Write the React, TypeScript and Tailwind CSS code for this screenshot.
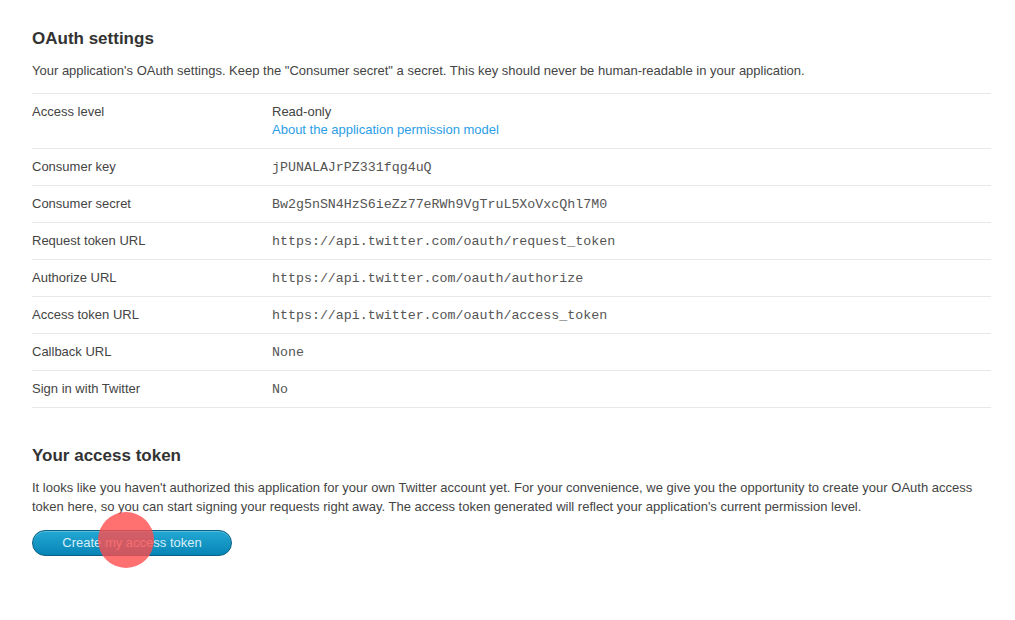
const rows: { label: string; value: string; mono?: boolean; link?: string }[] = [
  { label: 'Access level', value: 'Read-only', link: 'About the application permission model' },
  { label: 'Consumer key', value: 'jPUNALAJrPZ331fqg4uQ', mono: true },
  { label: 'Consumer secret', value: 'Bw2g5nSN4HzS6ieZz77eRWh9VgTruL5XoVxcQhl7M0', mono: true },
  { label: 'Request token URL', value: 'https://api.twitter.com/oauth/request_token', mono: true },
  { label: 'Authorize URL', value: 'https://api.twitter.com/oauth/authorize', mono: true },
  { label: 'Access token URL', value: 'https://api.twitter.com/oauth/access_token', mono: true },
  { label: 'Callback URL', value: 'None', mono: true },
  { label: 'Sign in with Twitter', value: 'No', mono: true },
];

export default function App() {
  return (
    <div className="min-h-[620px] bg-white text-[13px] text-[#444] font-['Liberation_Sans',Arial,sans-serif]">
      <div className="w-[959px] ml-[32px] pt-[29px]">
        <h2 className="text-[17px] font-bold text-[#333] leading-[20px]">OAuth settings</h2>
        <p className="mt-[13px] leading-[17px]">
          Your application's OAuth settings. Keep the "Consumer secret" a secret. This key should never be human-readable in your application.
        </p>

        <div className="mt-[14px] border-t border-[#e8e8e8]">
          {rows.map((row) => (
            <div key={row.label} className="flex border-b border-[#e8e8e8] pt-[9px] pb-[10px] leading-[17px]">
              <div className="w-[240px] shrink-0">{row.label}</div>
              <div>
                {row.mono ? (
                  <div className="h-[17px] leading-[17px] pt-[1px] font-['Liberation_Mono','Courier_New',monospace] text-[13.3px] text-[#555]">
                    {row.value}
                  </div>
                ) : (
                  <div>{row.value}</div>
                )}
                {row.link && (
                  <a href="#" className="block mt-[1px] text-[#2b9ee6]">
                    {row.link}
                  </a>
                )}
              </div>
            </div>
          ))}
        </div>

        <h2 className="mt-[38px] text-[17px] font-bold text-[#333] leading-[20px]">Your access token</h2>
        <p className="mt-[12px] leading-[19px]">
          It looks like you haven't authorized this application for your own Twitter account yet. For your convenience, we give you the opportunity to create your OAuth access token here, so you can start signing your requests right away. The access token generated will reflect your application's current permission level.
        </p>

        <div className="relative mt-[14px] w-[200px]">
          <button className="w-[200px] h-[26px] rounded-full border border-[#0a5f82] bg-gradient-to-b from-[#22a8d4] to-[#0585b6] text-[13px] text-[#d6eef8] shadow-[inset_0_1px_0_rgba(255,255,255,0.25)]">
            Create my access token
          </button>
          <span className="absolute left-[66px] top-[-18px] w-[56px] h-[56px] rounded-full bg-[#ff4c4c]/80 pointer-events-none" />
        </div>
      </div>
    </div>
  );
}
